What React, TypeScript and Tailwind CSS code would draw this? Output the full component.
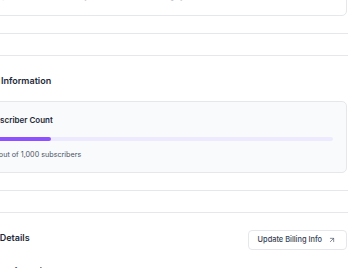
import { ArrowUpRight } from "lucide-react";

const subscriberCount = 186;
const subscriberLimit = 1000;

function Divider({ className }: { className: string }) {
  return <div className={`mr-[-1px] border-t border-gray-200 ${className}`} />;
}

export default function App() {
  const usage = Math.round((subscriberCount / subscriberLimit) * 100);

  return (
    <div className="h-[268px] w-[348px] overflow-hidden bg-white font-['Inter','Noto_Sans',sans-serif]">
      <div className="-ml-[29px] -mt-[23px] flex w-[376px] flex-col">
        {/* plan summary card, mostly scrolled out of view */}
        <div className="rounded-[5px] border border-gray-200 bg-white px-[13px] pt-[14px] pb-[14px]">
          <p className="text-[7px] leading-[9px] text-gray-400">
            Your plan renews automatically at the start of each billing cycle.
          </p>
        </div>

        <Divider className="mt-[17px]" />
        <Divider className="mt-[21px]" />

        <h2 className="mt-[18px] text-[9px] leading-[13px] font-semibold text-gray-800">
          Usage Information
        </h2>

        <div className="mt-[14px] rounded-[5px] border border-gray-200 bg-gray-50 px-[13px] pt-[13px] pb-[12px]">
          <h3 className="text-[8px] leading-[11px] font-semibold text-gray-800">
            Subscriber Count
          </h3>
          <div className="mt-[11px] h-[4px] w-full overflow-hidden rounded-full bg-violet-100">
            <div
              className="h-full rounded-full bg-violet-500"
              style={{ width: `${usage}%` }}
            />
          </div>
          <p className="mt-[9px] text-[7.2px] leading-[10px] text-gray-600">
            {subscriberCount} out of 1,000 subscribers
          </p>
        </div>

        <Divider className="mt-[17px]" />
        <Divider className="mt-[21px]" />

        <div className="mt-[17px] flex items-start justify-between">
          <h2 className="mt-[1px] text-[9px] leading-[13px] font-semibold text-gray-800">
            Billing Details
          </h2>
          <button className="flex h-[20px] items-center gap-[6px] rounded-[4px] border border-gray-200 bg-white pr-[10px] pl-[9px] text-[7.4px] font-medium text-gray-700">
            Update Billing Info
            <ArrowUpRight size={8} strokeWidth={2} className="text-gray-600" />
          </button>
        </div>

        <h3 className="mt-[16px] text-[8px] leading-[11px] font-semibold text-gray-800">
          Payment Information
        </h3>
      </div>
    </div>
  );
}
